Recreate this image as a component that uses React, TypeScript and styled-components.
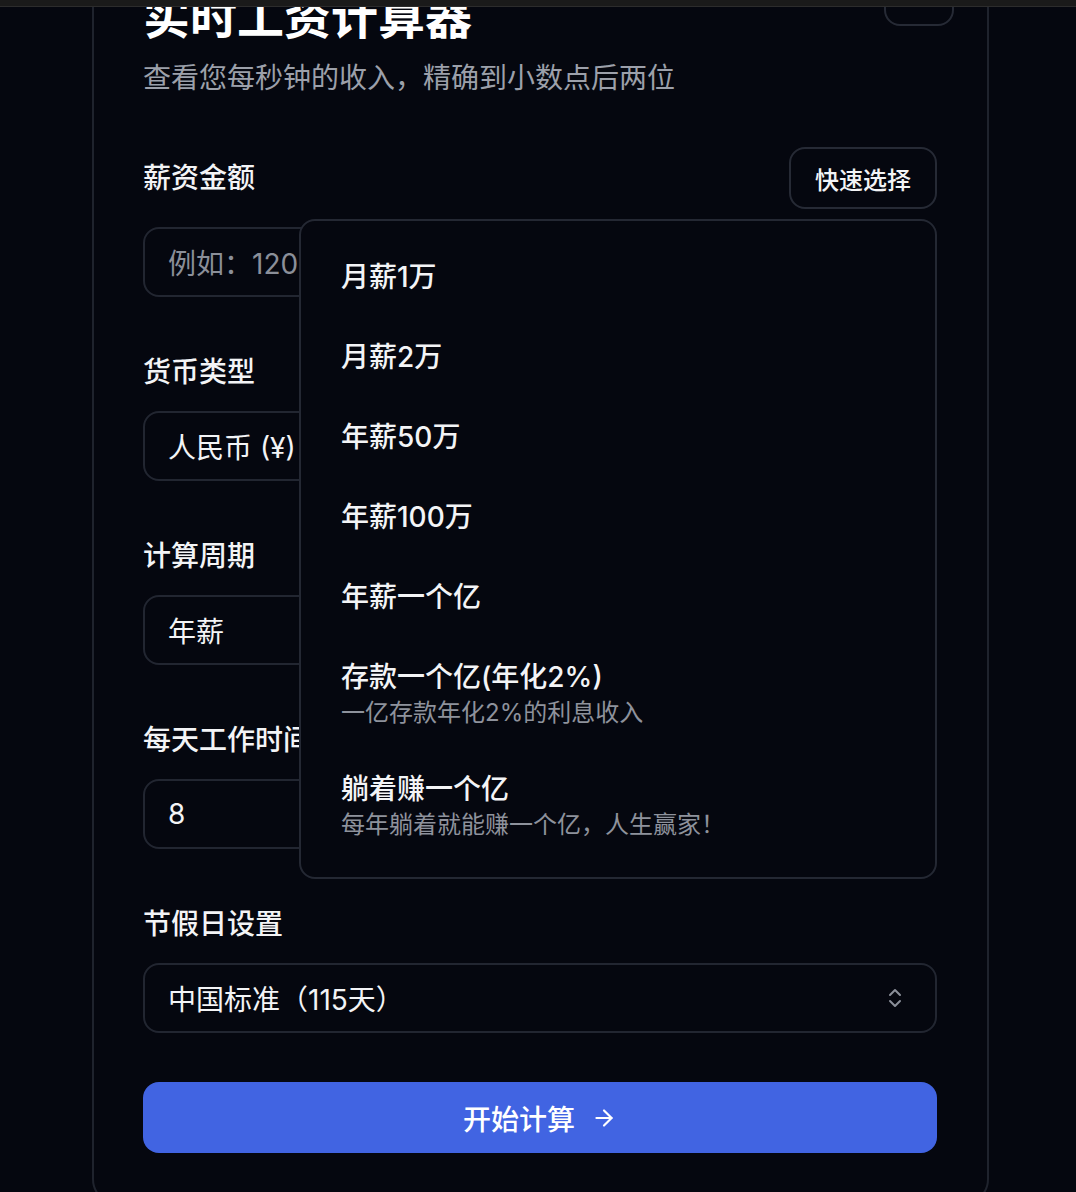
import React, { useState } from 'react';
import styled, { createGlobalStyle } from 'styled-components';
import { ArrowRight, ChevronsUpDown, Moon } from 'lucide-react';

const GlobalStyle = createGlobalStyle`
  html, body {
    margin: 0;
    padding: 0;
    background: #05070f;
    color: #f3f4f6;
    font-family: Inter, "Noto Sans CJK SC", sans-serif;
  }
  * { box-sizing: border-box; }
`;

const Screen = styled.div`
  height: 100vh;
  display: flex;
  flex-direction: column;
  overflow: hidden;
`;

const TopBar = styled.div`
  height: 7px;
  flex: none;
  background: #1a1a1a;
  border-bottom: 1px solid #2c2c2c;
  position: relative;
  z-index: 5;
`;

const Viewport = styled.div`
  flex: 1;
  overflow: hidden;
  padding-left: 92px;
`;

const Card = styled.div`
  position: relative;
  width: 897px;
  margin-top: -70px;
  padding: 50px 50px 50px 49px;
  border: 2px solid #1f232d;
  border-radius: 26px;
  background: #05070f;
`;

const CornerButton = styled.button`
  position: absolute;
  top: 25px;
  right: 33px;
  width: 70px;
  height: 62px;
  border: 2px solid #262a35;
  border-radius: 16px;
  background: transparent;
  color: #e5e7eb;
  display: flex;
  align-items: center;
  justify-content: center;
`;

const Title = styled.h1`
  margin: 0;
  font-size: 47px;
  line-height: 56px;
  font-weight: 700;
  color: #ffffff;
`;

const Subtitle = styled.p`
  margin: 13px 0 0;
  font-size: 28px;
  line-height: 40px;
  color: #9ca0aa;
`;

const Form = styled.div`
  margin-top: 49px;
  display: flex;
  flex-direction: column;
  gap: 54px;
`;

const Field = styled.div`
  display: flex;
  flex-direction: column;
  gap: 18px;
`;

const FieldHead = styled.div`
  position: relative;
  display: flex;
  align-items: center;
  justify-content: space-between;
`;

const Label = styled.div`
  font-size: 28px;
  line-height: 42px;
  font-weight: 500;
  color: #f3f4f6;
`;

const QuickButton = styled.button`
  height: 62px;
  padding: 0 24px;
  border: 2px solid #262a35;
  border-radius: 16px;
  background: #05070f;
  color: #f3f4f6;
  font-family: inherit;
  font-size: 24px;
  font-weight: 500;
`;

const Box = styled.div<{ placeholder?: boolean }>`
  height: 70px;
  padding: 0 28px 0 23px;
  border: 2px solid #222631;
  border-radius: 16px;
  display: flex;
  align-items: center;
  justify-content: space-between;
  font-size: 28px;
  color: ${p => (p.placeholder ? '#8b8f99' : '#f3f4f6')};
`;

const Chevron = styled(ChevronsUpDown)`
  color: #8b8f99;
`;

const Popover = styled.div`
  position: absolute;
  top: calc(100% + 10px);
  right: 0;
  width: 638px;
  padding: 16px 0;
  border: 2px solid #242833;
  border-radius: 16px;
  background: #05070f;
  z-index: 3;
`;

const Option = styled.div`
  padding: 20px 40px;
  display: flex;
  flex-direction: column;
`;

const OptionTitle = styled.div`
  font-size: 28px;
  line-height: 40px;
  font-weight: 500;
  color: #f3f4f6;
`;

const OptionNote = styled.div`
  font-size: 24px;
  line-height: 32px;
  color: #8e929c;
`;

const Submit = styled.button`
  margin-top: 49px;
  width: 100%;
  height: 71px;
  border: none;
  border-radius: 16px;
  background: #4164e2;
  color: #ffffff;
  font-family: inherit;
  font-size: 28px;
  font-weight: 500;
  display: flex;
  align-items: center;
  justify-content: center;
  gap: 16px;
`;

type Preset = { name: string; note?: string };

const presets: Preset[] = [
  { name: '月薪1万' },
  { name: '月薪2万' },
  { name: '年薪50万' },
  { name: '年薪100万' },
  { name: '年薪一个亿' },
  { name: '存款一个亿(年化2%)', note: '一亿存款年化2%的利息收入' },
  { name: '躺着赚一个亿', note: '每年躺着就能赚一个亿，人生赢家！' },
];

export default function App() {
  const [open] = useState(true);

  return (
    <>
      <GlobalStyle />
      <Screen>
        <TopBar />
        <Viewport>
          <Card>
            <CornerButton>
              <Moon size={24} />
            </CornerButton>
            <Title>实时工资计算器</Title>
            <Subtitle>查看您每秒钟的收入，精确到小数点后两位</Subtitle>

            <Form>
              <Field>
                <FieldHead>
                  <Label>薪资金额</Label>
                  <QuickButton>快速选择</QuickButton>
                  {open && (
                    <Popover>
                      {presets.map(p => (
                        <Option key={p.name}>
                          <OptionTitle>{p.name}</OptionTitle>
                          {p.note && <OptionNote>{p.note}</OptionNote>}
                        </Option>
                      ))}
                    </Popover>
                  )}
                </FieldHead>
                <Box placeholder>例如：120000</Box>
              </Field>

              <Field>
                <Label>货币类型</Label>
                <Box>
                  人民币 (¥)
                  <Chevron size={24} />
                </Box>
              </Field>

              <Field>
                <Label>计算周期</Label>
                <Box>
                  年薪
                  <Chevron size={24} />
                </Box>
              </Field>

              <Field>
                <Label>每天工作时间</Label>
                <Box>8</Box>
              </Field>

              <Field>
                <Label>节假日设置</Label>
                <Box>
                  中国标准（115天）
                  <Chevron size={24} />
                </Box>
              </Field>
            </Form>

            <Submit>
              开始计算
              <ArrowRight size={26} strokeWidth={2} />
            </Submit>
          </Card>
        </Viewport>
      </Screen>
    </>
  );
}
